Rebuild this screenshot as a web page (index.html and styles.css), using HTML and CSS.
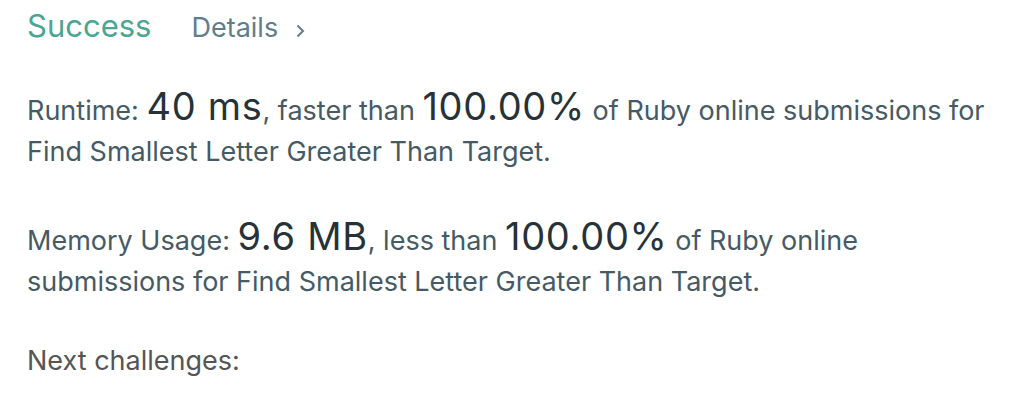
FILE: index.html
```html
<!DOCTYPE html>
<html>
<head>
<meta charset="utf-8">
<link rel="stylesheet" href="styles.css">
</head>
<body>
<div class="panel">
  <div class="header">
    <span class="status">Success</span>
    <a class="details">Details<svg class="chev" width="9" height="14" viewBox="0 0 9 14"><path d="M1.5 1.5L7 7L1.5 12.5" fill="none" stroke="#607d8b" stroke-width="2"/></svg></a>
  </div>
  <p class="stat">Runtime: <span class="big">40 ms</span>, faster than <span class="big">100.00%</span> of Ruby online submissions for Find Smallest Letter Greater Than Target.</p>
  <p class="stat">Memory Usage: <span class="big">9.6 MB</span>, less than <span class="big">100.00%</span> of Ruby online submissions for Find Smallest Letter Greater Than Target.</p>
  <p class="next">Next challenges:</p>
</div>
</body>
</html>
```
FILE: styles.css
```css
html, body {
  margin: 0;
  padding: 0;
  background: #fff;
}
body {
  font-family: Inter, "Noto Sans", sans-serif;
}
.panel {
  padding: 6px 0 0 27px;
  width: 975px;
}
.header {
  display: flex;
  align-items: baseline;
  gap: 40px;
  height: 44px;
}
.status {
  color: #4aa594;
  font-size: 31px;
  line-height: 40px;
}
.details {
  color: #607d8b;
  font-size: 27px;
  line-height: 40px;
}
.chev {
  margin-left: 18px;
  vertical-align: -1px;
}
.stat {
  color: #455a64;
  font-size: 27px;
  line-height: 41px;
  margin: 37px 0 0;
}
.stat + .stat {
  margin-top: 45px;
}
.big {
  color: #263238;
  font-size: 38px;
  letter-spacing: 0.7px;
  line-height: 1;
}
.next {
  color: #555;
  font-size: 27px;
  line-height: 41px;
  margin: 38px 0 0;
}
```
